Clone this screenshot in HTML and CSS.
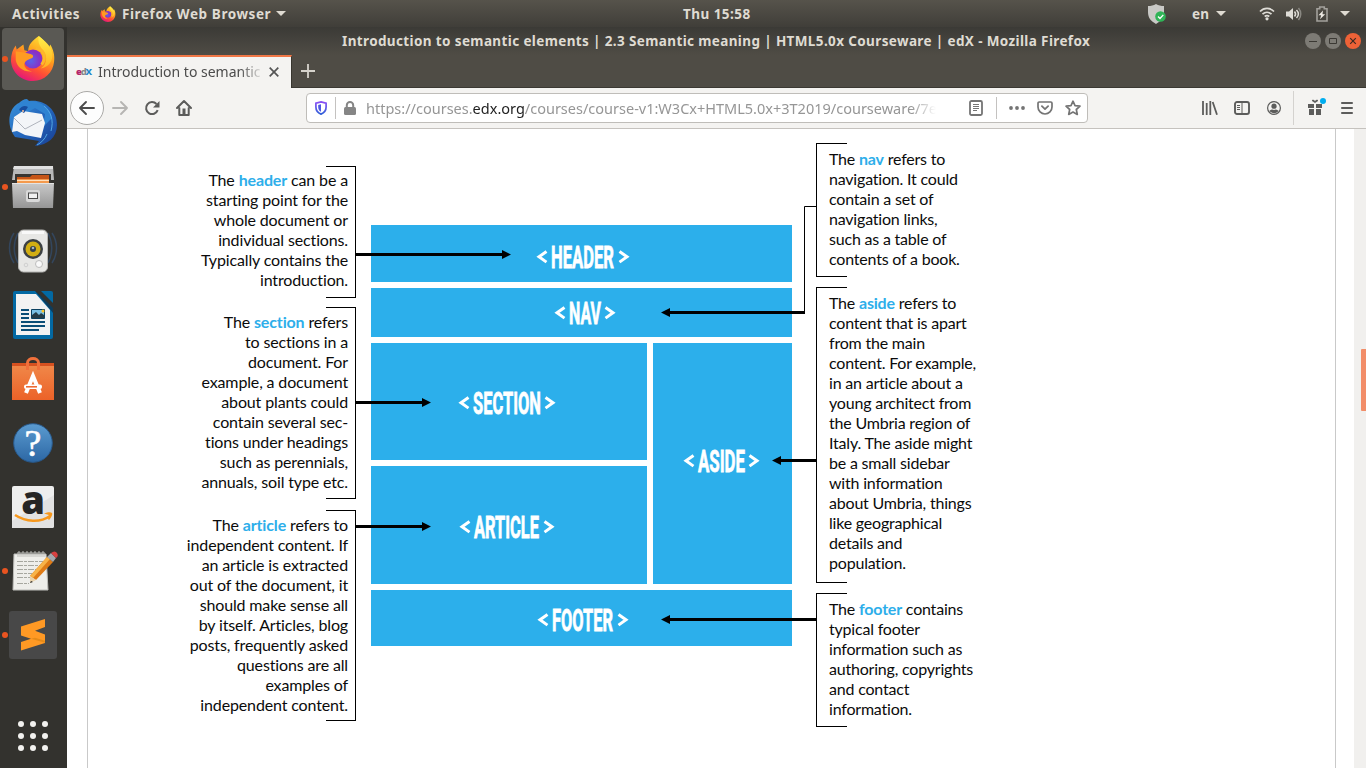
FILE: index.html
```html
<!DOCTYPE html>
<html lang="en">
<head>
<meta charset="utf-8">
<title>Introduction to semantic elements</title>
<link rel="stylesheet" href="styles.css">
</head>
<body>
<svg class="defs" width="0" height="0" aria-hidden="true">
  <defs>
    <linearGradient id="flame" x1=".8" y1="0" x2=".3" y2="1"><stop offset="0" stop-color="#ffe83a"/><stop offset=".4" stop-color="#ffa01c"/><stop offset=".7" stop-color="#ff4f35"/><stop offset="1" stop-color="#e3137e"/></linearGradient>
    <linearGradient id="tail" x1="0" y1="0" x2="0" y2="1"><stop offset="0" stop-color="#fff04a"/><stop offset="1" stop-color="#ffb020"/></linearGradient>
    <radialGradient id="globe" cx=".4" cy=".6"><stop offset="0" stop-color="#5a63e8"/><stop offset="1" stop-color="#8a2fc4"/></radialGradient>
    <linearGradient id="shield" x1="0" y1="0" x2="0" y2="1"><stop offset="0" stop-color="#8a4ff5"/><stop offset="1" stop-color="#2f5fd8"/></linearGradient>
    <linearGradient id="bird" x1="0" y1="0" x2="1" y2="1"><stop offset="0" stop-color="#3a94dc"/><stop offset=".5" stop-color="#2467bd"/><stop offset="1" stop-color="#183d92"/></linearGradient>
    <linearGradient id="metal" x1="0" y1="0" x2="0" y2="1"><stop offset="0" stop-color="#c9c9c9"/><stop offset="1" stop-color="#969696"/></linearGradient>
    <linearGradient id="ask" x1="0" y1="0" x2="0" y2="1"><stop offset="0" stop-color="#5b9bd0"/><stop offset="1" stop-color="#2c67a4"/></linearGradient>
    <linearGradient id="bag" x1="0" y1="0" x2="0" y2="1"><stop offset="0" stop-color="#f08a4b"/><stop offset="1" stop-color="#ec6228"/></linearGradient>
    <symbol id="fox" viewBox="0 0 48 48">
      <path fill="url(#flame)" d="M30 1c5 4 9 8 10 14l2-5c3 5 5 11 4 18-1 11-10 20-22 20S2 39 1 27c0-7 2-12 5-16l1 4 7-5 1 6 4 1C19 10 23 6 30 1z"/>
      <path fill="url(#tail)" d="M30 1c-1 5 0 9 3 13 6 5 7 16-1 21 9-2 13-8 12-16-1-8-7-12-14-18z"/>
      <circle cx="24" cy="25" r="10" fill="url(#globe)"/>
      <path fill="#ff9b22" d="M6 17c5 1 9 1 12 2 3 1 7 1 6 4-1 2-5 2-8 5-3 4 1 9 7 10-9 1-16-5-17-12z"/>
      <path fill="none" stroke="#fdb72b" stroke-width="3" d="M27 14c9 1 11 10 6 17"/>
    </symbol>
  </defs>
</svg>

<header class="panel">
  <span class="activities">Activities</span>
  <svg class="panel-fox" width="16" height="16"><use href="#fox"/></svg>
  <span class="app-name">Firefox Web Browser</span>
  <i class="caret"></i>
  <span class="clock">Thu 15:58</span>
  <div class="tray">
    <svg width="22" height="22" viewBox="0 0 22 22"><path fill="#c9c9c6" d="M10 1c2.500 1.500 5 2 8 2v6c0 6-3 9-8 12-5-3-8-6-8-12V3c3 0 5.500-.5 8-2z"/><circle cx="14.500" cy="13.500" r="5.300" fill="#2fb457"/><path fill="none" stroke="#fff" stroke-width="1.300" d="M12 13.500l2 2 3.300-3.600"/></svg>
    <span class="lang">en</span><i class="caret lang-caret"></i>
    <svg class="wifi" width="16" height="14" viewBox="0 0 16 14" fill="none" stroke="#dedcd6" stroke-width="1.700"><path d="M1 4.500C5 .2 11 .2 15 4.500M3.500 7.200c2.700-2.600 6.300-2.600 9 0M5.700 9.500c1.400-1.200 3.200-1.200 4.600 0"/><circle cx="8" cy="11.800" r="1.600" fill="#dedcd6" stroke="none"/></svg>
    <svg class="sound" width="16" height="14" viewBox="0 0 16 14" fill="none" stroke="#dedcd6" stroke-width="1.500"><path fill="#dedcd6" stroke="none" d="M0 4.500h3L7 1v12L3 9.500H0z"/><path d="M8.500 4.500c1.300 1.500 1.300 3.500 0 5M10.500 3c2.300 2.400 2.300 5.600 0 8"/><path stroke="#8a8882" d="M12.500 1c3 3.500 3 8.500 0 12"/></svg>
    <svg class="battery" width="12" height="16" viewBox="0 0 12 16"><path fill="none" stroke="#a3a19c" stroke-width="1.600" d="M1 2.800h2.700V1h4.600v1.800H11V15H1z"/><path fill="#eeeae4" d="M7 4.500L2.500 9.200h2.700L4 13.300l5.200-5H6.500z"/></svg>
    <i class="caret"></i>
  </div>
</header>

<div class="desktop">
  <nav class="dock">
    <div class="app running focused"><svg width="64" height="64"><use href="#fox" x="9" y="7" width="46" height="48"/></svg></div>
    <div class="app"><svg width="64" height="64" viewBox="0 0 64 64">
      <path fill="url(#bird)" d="M12 43C5 30 9 16 18 12c2-2 5-4 8-4l2 2c15-2 28 8 28 24 0 12-9 20-22 21l4-5-24-4z"/>
      <path fill="#2f83d2" d="M28 10c-7-1-12 3-14 9l8 5 12-7 10 6-2 13 9-9C50 17 40 10 28 10z"/>
      <path fill="#f3f5f8" d="M13 26l9-6 19 3 3 9-4 15-16-3-8-4-5 1z"/>
      <path fill="none" stroke="#b0b4bd" d="M13 27l11 11 17-9"/>
      <path fill="#184d9f" d="M18 19c2-4 6-5 9-3l-4 6z"/><circle cx="22" cy="20" r="1" fill="#f7c29a"/>
      <path fill="none" stroke="#53a7e3" d="M43 15c7 6 10 14 7 25M46 43c-2 5-6 9-10 11"/>
    </svg></div>
    <div class="app running"><svg width="64" height="64" viewBox="0 0 64 64">
      <path fill="#b8b8b8" d="M13 11h39l1 14H11z"/><path fill="#e1e1e1" d="M13 11h39v3H12z"/>
      <path fill="#383531" d="M14 19h36v11H14z"/><path fill="#c65517" d="M16 22h13l2-2h17v10H16z"/><path fill="#f49a4d" d="M16 24h32v5H16z"/><path fill="#ffe0bd" d="M16 25h32v1H16z"/>
      <path fill="url(#metal)" d="M11 28h42l-1 25H12z"/><path stroke="#e4e4e4" d="M11 28.500h42"/>
      <rect x="25" y="35" width="14" height="12" rx="2" fill="#d9d9d9"/><rect x="27.500" y="38" width="9" height="5.500" fill="#f1f1f1" stroke="#4a4a4a"/>
    </svg></div>
    <div class="app"><svg width="64" height="64" viewBox="0 0 64 64">
      <g fill="none" stroke="#33465d" stroke-width="1.500"><path d="M17 14c-5 10-5 20 0 30M13 14c-6 9-6 21 0 30M47 14c5 10 5 20 0 30M51 14c6 9 6 21 0 30"/></g>
      <rect x="17.500" y="11" width="29" height="42" rx="5" fill="#e7e7e5" stroke="#b5b5b3"/><path fill="#f9f9f9" d="M21 12h22v3H21z"/>
      <circle cx="32" cy="30" r="10" fill="#3c4043"/><circle cx="32" cy="30" r="7.500" fill="#d2ae13"/><circle cx="32" cy="30" r="3" fill="#333f4b"/><circle cx="32" cy="29" r="1.300" fill="#a9b5be"/>
      <circle cx="38" cy="45" r="3.500" fill="#f9f9f9" stroke="#bcbcbc"/><circle cx="25" cy="46" r="1.800" fill="none" stroke="#d0d0d0"/>
    </svg></div>
    <div class="app"><svg width="64" height="64" viewBox="0 0 64 64">
      <path fill="#0369a3" d="M14 8h20l18 18v28q0 2-2 2H14q-2 0-2-2V10q0-2 2-2z"/><path fill="#0e3c5b" d="M34 8l4 3 14 14v5z"/><path fill="#0369a3" d="M40 8h10q2 0 2 2v10z"/>
      <path fill="#f2f2f2" d="M15 11h20l14 16v25H15z"/>
      <g stroke="#0b4d76" stroke-width="2"><path d="M20 27h8M20 31h8M20 35h8M20 39h24M20 43h24M20 47h18"/></g>
      <path fill="#7ac0e5" stroke="#0b4060" d="M30.500 26.500h13v9h-13z"/><path fill="#263c47" d="M31 35v-3l4-3 3 3 2-2 3 2v3z"/><circle cx="42" cy="28" r="1.500" fill="#ffc425"/>
    </svg></div>
    <div class="app"><svg width="64" height="64" viewBox="0 0 64 64">
      <path fill="url(#bag)" d="M11 16h42v37H11z"/><path fill="#d65120" d="M11 16h42v3H11z"/><path fill="none" stroke="#f0703b" stroke-width="3" d="M26.500 23v-7c0-6 11-6 11 0v7"/>
      <path fill="none" stroke="#fff" stroke-width="4" d="M25 46l7-17 7 17"/><rect x="23" y="37.500" width="18" height="4.500" rx="2" fill="#fff"/><path stroke="#ec6228" stroke-width="1.500" d="M25 39.800h11"/>
    </svg></div>
    <div class="app"><svg width="64" height="64" viewBox="0 0 64 64"><circle cx="32" cy="32" r="19.300" fill="url(#ask)" stroke="#28598c"/><text class="ask" x="32" y="45" text-anchor="middle">?</text></svg></div>
    <div class="app"><svg width="64" height="64" viewBox="0 0 64 64"><rect x="11" y="11" width="42" height="42" rx="2" fill="#eee"/><path fill="#e2e2e2" d="M53 20v31q0 2-2 2H11V46z"/><text class="letter-a" x="32" y="39" text-anchor="middle">a</text><path fill="none" stroke="#f7981d" stroke-width="2.600" d="M14 40c11 7 25 8 35 1"/><path fill="#f7981d" d="M43 38.500c4-1.500 7-1.500 8-.5s-1 5-3 7l-1-1 1-4z"/></svg></div>
    <div class="app running"><svg width="64" height="64" viewBox="0 0 64 64">
      <path fill="#eeeeea" stroke="#bdbdb9" d="M13 15h32l2 36H12z"/>
      <g stroke="#a6a79f" stroke-width="1" stroke-dasharray="6 1 3 1"><path d="M16 22.500h27M16 26.500h24M16 30.500h25M16 34.500h20M16 38.500h14M16 44.500h12"/></g>
      <g fill="none" stroke="#bfbfbb"><path d="M17 18v-5h2v5M21 18v-5h2v5M25 18v-5h2v5M29 18v-5h2v5M33 18v-5h2v5M37 18v-5h2v5M41 18v-5h2v5"/></g>
      <path fill="#df7b16" d="M46 18l6 5-17 18-6-4z"/><path fill="#f8b348" d="M46 18l3 2-17 19-3-2z"/><path fill="#e9d3ac" d="M29 37l6 4-6 3z"/><path fill="#252525" d="M30 42l2 1-3 1z"/><path fill="#a3a8ad" d="M46 18l4-4 5 5-3 4z"/><path fill="#d84040" d="M50 14q4-3 6 0t-1 5z"/>
    </svg></div>
    <div class="app running"><svg width="64" height="64" viewBox="0 0 64 64"><rect x="8" y="8" width="48" height="48" rx="3" fill="#484848"/><path fill="#ff9924" d="M20 23.500L44 16v8l-10 3.700 10 3.800v8.500l-24 7.500v-8.500l10-3.300-10-3.300z"/><path fill="#e58a18" d="M30 35.700l4-1 10 3v2z"/></svg></div>
    <div class="app launcher"><svg width="64" height="64" viewBox="0 0 64 64" fill="#f2f1ef"><circle cx="20" cy="20" r="3"/><circle cx="32" cy="20" r="3"/><circle cx="44" cy="20" r="3"/><circle cx="20" cy="32" r="3"/><circle cx="32" cy="32" r="3"/><circle cx="44" cy="32" r="3"/><circle cx="20" cy="44" r="3"/><circle cx="32" cy="44" r="3"/><circle cx="44" cy="44" r="3"/></svg></div>
  </nav>

  <main class="window">
    <div class="titlebar">
      <span class="window-title">Introduction to semantic elements | 2.3 Semantic meaning | HTML5.0x Courseware | edX - Mozilla Firefox</span>
      <div class="window-buttons">
        <svg width="16" height="16" viewBox="0 0 16 16"><circle cx="8" cy="8" r="8" fill="#7d7b75"/><path stroke="#3b3934" d="M4 8.500h8"/></svg>
        <svg width="16" height="16" viewBox="0 0 16 16"><circle cx="8" cy="8" r="8" fill="#7d7b75"/><path fill="none" stroke="#3b3934" d="M4.500 5.500h7v5h-7z"/></svg>
        <svg width="16" height="16" viewBox="0 0 16 16"><circle cx="8" cy="8" r="8" fill="#ee6237"/><path stroke="#3b2a22" stroke-width="1.200" d="M5.200 5.200l5.600 5.600m0-5.600l-5.600 5.600"/></svg>
      </div>
    </div>
    <div class="tabs">
      <div class="tab">
        <span class="favicon"><b>e</b><i>d</i><u>X</u></span>
        <span class="tab-title">Introduction to semantic</span>
        <svg width="10" height="10" viewBox="0 0 10 10"><path stroke="#555" stroke-width="1.700" d="M.7.7l8.600 8.600m0-8.600L.7 9.300"/></svg>
      </div>
      <svg class="new-tab" width="14" height="14" viewBox="0 0 14 14"><path stroke="#d6d3cc" stroke-width="1.800" d="M7 0v14M0 7h14"/></svg>
    </div>
    <div class="toolbar">
      <span class="back"><svg width="16" height="16" viewBox="0 0 16 16" fill="none" stroke="#4c4c4c" stroke-width="1.900" stroke-linecap="round" stroke-linejoin="round"><path d="M15 8H1m6-6L1 8l6 6"/></svg></span>
      <svg class="forward" width="16" height="16" viewBox="0 0 16 16" fill="none" stroke="#b6b5b3" stroke-width="1.900" stroke-linecap="round" stroke-linejoin="round"><path d="M1 8h14M9 2l6 6-6 6"/></svg>
      <svg class="reload" width="16" height="16" viewBox="0 0 16 16"><path fill="none" stroke="#5c5c5b" stroke-width="2" d="M13.700 10.200A6 6 0 1 1 12.500 4"/><path fill="#5c5c5b" d="M15.500 1v6.500H9z"/></svg>
      <svg class="home" width="16" height="16" viewBox="0 0 16 16"><path fill="none" stroke="#5c5c5b" stroke-width="2" stroke-linecap="round" stroke-linejoin="round" d="M1 8l7-7 7 7M3.300 8v7h9.400V8"/><path fill="#5c5c5b" d="M6.500 8.500h3V15h-3z"/></svg>
      <div class="urlbar">
        <svg class="tracking" width="12" height="14" viewBox="0 0 12 14"><path fill="none" stroke="url(#shield)" stroke-width="1.700" d="M6 .9l5.100 1.200v4C11.100 10 9 12 6 13.100 3 12 .9 10 .9 6.100v-4z"/><path fill="#4d58e2" d="M6 3.300v7.500C4 9.800 3.200 8 3.200 6V4z"/></svg>
        <i class="rule"></i>
        <svg class="lock" width="12" height="14" viewBox="0 0 12 14"><rect y="6" width="12" height="8" rx="1.500" fill="#858585"/><path fill="none" stroke="#858585" stroke-width="2" d="M2.800 7V4.200a3.200 3.200 0 0 1 6.400 0V7"/></svg>
        <span class="url">https://courses.<b>edx.org</b>/courses/course-v1:W3Cx+HTML5.0x+3T2019/courseware/7e</span>
        <svg class="reader" width="14" height="16" viewBox="0 0 14 16" fill="none" stroke="#747474"><rect x="1" y="1" width="12" height="14" rx="1.500" stroke-width="1.800"/><path d="M4 4.500h6M4 6.500h6M4 8.500h6M4 10.500h4"/></svg>
        <i class="rule rule-right"></i>
        <svg class="dots" width="16" height="4" viewBox="0 0 16 4" fill="#747474"><circle cx="2" cy="2" r="1.900"/><circle cx="8" cy="2" r="1.900"/><circle cx="14" cy="2" r="1.900"/></svg>
        <svg class="pocket" width="16" height="14" viewBox="0 0 16 14" fill="none" stroke="#747474" stroke-linecap="round" stroke-linejoin="round"><path stroke-width="1.700" d="M2.200 1h11.600q1.200 0 1.200 1.200V6a7 7 0 0 1-14 0V2.200Q1 1 2.200 1z"/><path stroke-width="1.800" d="M4.900 5.200L8 8.100l3.100-2.900"/></svg>
        <svg class="star" width="16" height="16" viewBox="0 0 16 16"><path fill="none" stroke="#747474" stroke-width="1.700" stroke-linejoin="round" d="M8 1.200l2 4.500 5 .5-3.700 3.300 1 4.900L8 12l-4.300 2.400 1-4.900L1 6.200l5-.5z"/></svg>
      </div>
      <svg class="library" width="16" height="14" viewBox="0 0 16 14" stroke="#5c5c5b" stroke-width="1.800"><path d="M1 0v14M4.700 2v12M8.300 0v14M10.700 1l4.300 12.700"/></svg>
      <svg class="sidebar" width="16" height="14" viewBox="0 0 16 14" fill="none" stroke="#5c5c5b"><rect x="1" y="1" width="14" height="12" rx="2" stroke-width="1.900"/><path d="M8 1v12M3 4.500h3M3 6.500h3M3 8.500h3"/></svg>
      <svg class="account" width="14" height="14" viewBox="0 0 14 14"><circle cx="7" cy="7" r="6.400" fill="none" stroke="#5c5c5b" stroke-width="1.200"/><circle cx="7" cy="5.200" r="2.600" fill="#5c5c5b"/><path fill="#5c5c5b" d="M2.300 10q2-2.500 4.700-1 2.700-1.500 4.700 1Q7 14.500 2.300 10z"/></svg>
      <i class="toolbar-rule"></i>
      <svg class="gift" width="20" height="18" viewBox="0 0 20 18"><path fill="#5c5c5b" d="M1 6h6v4H1zm8 0h6v4H9zM2 11h5v6H2zm7 0h5v6H9zM5 3c0-2 2-1 3 0 1-1 3-2 3 0l-3 2z"/><circle cx="16" cy="3" r="3" fill="#00adef"/></svg>
      <svg class="menu" width="12" height="12" viewBox="0 0 12 12"><path stroke="#5c5c5b" stroke-width="1.800" stroke-linecap="round" d="M.9 1h10.200M.9 6h10.200M.9 11h10.200"/></svg>
    </div>

    <div class="viewport">
      <article class="lesson">
        <div class="diagram">
          <div class="notes notes-left">
            <p class="note note-header">The <b>header</b> can be a<br>starting point for the<br>whole document or<br>individual sections.<br>Typically contains the<br>introduction.</p>
            <p class="note note-section">The <b>section</b> refers<br>to sections in a<br>document. For<br>example, a document<br>about plants could<br>contain several sec-<br>tions under headings<br>such as perennials,<br>annuals, soil type etc.</p>
            <p class="note note-article">The <b>article</b> refers to<br>independent content. If<br>an article is extracted<br>out of the document, it<br>should make sense all<br>by itself. Articles, blog<br>posts, frequently asked<br>questions are all<br>examples of<br>independent content.</p>
          </div>
          <div class="blocks">
            <div class="block b-header"><svg class="label" width="92" height="42"><path d="M9.500 15.500L2 20.800l7.500 5.300M82.500 15.500l7.500 5.300-7.500 5.300"/><text x="14" y="32" textLength="63" lengthAdjust="spacingAndGlyphs">HEADER</text></svg></div>
            <div class="block b-nav"><svg class="label" width="60" height="42"><path d="M9.500 15.500L2 20.800l7.500 5.300M50.500 15.500l7.500 5.300-7.500 5.300"/><text x="14" y="32" textLength="32" lengthAdjust="spacingAndGlyphs">NAV</text></svg></div>
            <div class="block b-section"><svg class="label" width="96" height="42"><path d="M9.500 15.500L2 20.800l7.500 5.300M86.500 15.500l7.500 5.300-7.500 5.300"/><text x="14" y="32" textLength="68" lengthAdjust="spacingAndGlyphs">SECTION</text></svg></div>
            <div class="block b-article"><svg class="label" width="94" height="42"><path d="M9.500 15.500L2 20.800l7.500 5.300M84.500 15.500l7.500 5.300-7.500 5.300"/><text x="14" y="32" textLength="65" lengthAdjust="spacingAndGlyphs">ARTICLE</text></svg></div>
            <div class="block b-aside"><svg class="label" width="75" height="42"><path d="M9.500 15.500L2 20.800l7.500 5.300M65.500 15.500l7.500 5.300-7.500 5.300"/><text x="14" y="32" textLength="47" lengthAdjust="spacingAndGlyphs">ASIDE</text></svg></div>
            <div class="block b-footer"><svg class="label" width="90" height="42"><path d="M9.500 15.500L2 20.800l7.500 5.300M80.500 15.500l7.500 5.300-7.500 5.300"/><text x="14" y="32" textLength="61" lengthAdjust="spacingAndGlyphs">FOOTER</text></svg></div>
          </div>
          <div class="notes notes-right">
            <p class="note note-nav">The <b>nav</b> refers to<br>navigation. It could<br>contain a set of<br>navigation links,<br>such as a table of<br>contents of a book.</p>
            <p class="note note-aside">The <b>aside</b> refers to<br>content that is apart<br>from the main<br>content. For example,<br>in an article about a<br>young architect from<br>the Umbria region of<br>Italy. The aside might<br>be a small sidebar<br>with information<br>about Umbria, things<br>like geographical<br>details and<br>population.</p>
            <p class="note note-footer">The <b>footer</b> contains<br>typical footer<br>information such as<br>authoring, copyrights<br>and contact<br>information.</p>
          </div>
          <svg class="arrows" viewBox="88 129 900 639" width="900" height="639">
            <g fill="none" stroke="#000" stroke-width="3"><path d="M356 254.500h148M356 402.500h68M356 526.500h68M805 312.500H668M816 460.500h-38M816 619.500H668"/></g>
            <path fill="none" stroke="#000" d="M816 206.500h-11.500V313"/>
            <path d="M502 250l9 4.500-9 4.500zM422 398l9 4.500-9 4.500zM422 522l9 4.500-9 4.500zM670 308l-9 4.500 9 4.500zM781 456l-9 4.500 9 4.500zM670 615l-9 4.500 9 4.500z"/>
          </svg>
        </div>
      </article>
      <div class="scrollbar"><div class="thumb"></div></div>
    </div>
  </main>
</div>
</body>
</html>
```
FILE: styles.css
```css
* { box-sizing: border-box; }
body { margin: 0; width: 1366px; height: 768px; overflow: hidden; font-family: "Noto Sans", sans-serif; background: #33322e; }
svg { display: block; flex: none; overflow: visible; }
.defs { position: absolute; }

.panel { position: relative; display: flex; align-items: center; height: 27px; padding: 0 16px 0 12px; background: linear-gradient(#56534b, #403e39); color: #dfdbd2; font-size: 13.5px; font-weight: 700; white-space: nowrap; }
.activities { width: 88px; letter-spacing: .55px; }
.app-name { margin-left: 6px; width: 150px; letter-spacing: .58px; }
.caret { flex: none; margin-left: 4px; border: 5px solid transparent; border-top-color: #dfdbd2; border-bottom: 0; }
.clock { position: absolute; left: 683px; letter-spacing: .45px; }
.tray { display: flex; align-items: center; margin-left: auto; }
.lang { margin-left: 24px; width: 18px; letter-spacing: .3px; }
.lang-caret { margin-left: 6px; }
.wifi { margin-left: 33px; }
.sound { margin-left: 11px; }
.battery { margin-left: 14px; }
.battery + .caret { margin-left: 12px; }

.desktop { display: flex; height: 741px; }
.dock { display: flex; flex-direction: column; width: 67px; padding-left: 1px; background: #33322e; }
.app { position: relative; width: 64px; height: 64px; flex: none; }
.focused::after { content: ""; position: absolute; z-index: 0; left: 1px; top: 1px; width: 62px; height: 62px; border-radius: 4px; background: #5a5954; }
.focused svg { position: relative; z-index: 1; }
.running::before { content: ""; position: absolute; z-index: 2; left: 1px; top: 29px; width: 6px; height: 6px; border-radius: 50%; background: #e95420; }
.launcher { margin-top: auto; }
.ask { font: 38px "Liberation Serif", serif; fill: #fff; stroke: #fff; stroke-width: .6px; }
.letter-a { font: 800 38px "Open Sans", sans-serif; fill: #262626; }

.window { flex: 1; display: flex; flex-direction: column; min-width: 0; background: #fff; }
.titlebar { display: flex; align-items: center; height: 28px; padding: 0 5px 0 275px; background: linear-gradient(#3b3a36, #4f4c45); color: #dfdbd2; }
.window-title { width: 760px; font-size: 13.5px; font-weight: 700; letter-spacing: .375px; white-space: nowrap; }
.window-buttons { display: flex; gap: 4px; margin-left: auto; }
.tabs { display: flex; height: 33px; background: #4f4c45; border-bottom: 1px solid #3b3933; }
.tab { display: flex; align-items: center; width: 225px; height: 33px; padding: 0 12px 2px 9px; border-top: 2px solid #f07746; border-right: 1px solid #38362f; background: #f4f3f1; }
.favicon { width: 16px; margin-right: 6px; font-size: 9.5px; font-weight: 800; letter-spacing: -1.2px; white-space: nowrap; }
.favicon b { color: #b5246b; }
.favicon i { font-style: normal; color: #868686; }
.favicon u { text-decoration: none; color: #1f86c9; }
.tab-title { width: 166px; margin-right: 5px; overflow: hidden; white-space: nowrap; font-size: 14px; color: #4c4c4c; -webkit-mask-image: linear-gradient(90deg, #000 142px, transparent 166px); mask-image: linear-gradient(90deg, #000 142px, transparent 166px); }
.new-tab { margin: 9px 0 0 9px; }

.toolbar { display: flex; align-items: center; height: 41px; padding: 0 13px 0 3px; background: #f4f3f1; border-bottom: 1px solid #c5c2be; }
.back { display: grid; place-items: center; width: 34px; height: 34px; border: 1px solid #aaa9a7; border-radius: 50%; background: #fdfdfd; }
.forward { margin-left: 8px; }
.reload, .home { margin-left: 16px; }
.urlbar { display: flex; align-items: center; width: 782px; height: 30px; margin-left: 114px; padding: 0 6px 0 8px; border: 1px solid #bfbdb9; border-radius: 4px; background: #fff; }
.rule { flex: none; width: 1px; height: 22px; margin-left: 8px; background: #c4c2c0; }
.lock { margin-left: 8px; }
.url { width: 570px; margin-left: 10px; overflow: hidden; white-space: nowrap; font-size: 14.5px; color: #969696; -webkit-mask-image: linear-gradient(90deg, #000 545px, transparent 570px); mask-image: linear-gradient(90deg, #000 545px, transparent 570px); }
.url b { font-weight: 400; color: #222; }
.reader { margin-left: auto; }
.rule-right { margin-left: 13px; }
.dots { margin-left: 12px; }
.pocket, .star { margin-left: 12px; }
.library { margin-left: 114px; }
.sidebar { margin-left: 16px; }
.account { margin-left: 17px; }
.toolbar-rule { width: 1px; height: 34px; margin-left: 12px; background: #d4d2cf; }
.gift { margin: 0 0 3px 13px; }
.menu { margin-left: auto; }

.viewport { display: flex; flex: 1; padding-left: 20px; }
.lesson { width: 1249px; border: solid #c9c9c9; border-width: 0 1px; }
.scrollbar { width: 12px; margin-left: auto; padding: 220px 0 0 7px; background: #f1f0ee; }
.thumb { height: 62px; background: #f28d68; border-radius: 1px 0 0 1px; }

.diagram { position: relative; display: flex; width: 900px; height: 639px; }
.arrows { position: absolute; left: 0; top: 0; }
.notes { display: flex; flex-direction: column; color: #0b0b0b; font: 16px/20px Lato, sans-serif; letter-spacing: -.2px; white-space: nowrap; }
.notes b { color: #2daeea; }
.note { margin: 0; }
.notes-left { width: 268px; padding-top: 37px; text-align: right; letter-spacing: -.14px; }
.notes-left .note { padding: 5px 7px 0 0; border-right: 1px solid #000; background: linear-gradient(#000, #000) right top / 29px 1px no-repeat, linear-gradient(#000, #000) right bottom / 29px 1px no-repeat; }
.note-header { height: 132px; }
.notes-left .note-header { padding-top: 4px; }
.note-section { height: 192px; }
.note-article { height: 211px; }
.notes-left .note-section { margin-top: 9px; }
.notes-left .note-article { margin-top: 11px; }
.notes-right { width: 172px; margin-left: 24px; padding-top: 14px; }
.notes-right .note { padding: 6px 0 0 12px; border-left: 1px solid #000; background: linear-gradient(#000, #000) left top / 30px 1px no-repeat, linear-gradient(#000, #000) left bottom / 30px 1px no-repeat; }
.note-nav { height: 134px; }
.notes-right .note-aside { height: 296px; margin-top: 10px; }
.notes-right .note-footer { height: 134px; margin-top: 10px; }

.blocks { display: grid; width: 421px; height: 421px; margin: 96px 0 0 15px; gap: 6px; grid-template: 57px 49px 117px 118px 56px / 276px 139px; }
.block { display: flex; align-items: center; justify-content: center; background: #2cafeb; }
.b-header { grid-column: 1 / 3; padding: 6px 0 0 3px; }
.b-nav { grid-column: 1 / 3; padding: 1px 0 0 7px; }
.b-section { grid-area: 3 / 1; padding: 2px 4px 0 0; }
.b-article { grid-area: 4 / 1; padding: 4px 4px 0 0; }
.b-aside { grid-area: 3 / 2 / 5 / 3; padding: 0 2px 5px 0; }
.b-footer { grid-column: 1 / 3; padding: 4px 0 0 3px; }
.label text { font: bold 32px Roboto, sans-serif; fill: #fff; stroke: #fff; stroke-width: .8px; }
.label path { fill: none; stroke: #fff; stroke-width: 3px; }
```
